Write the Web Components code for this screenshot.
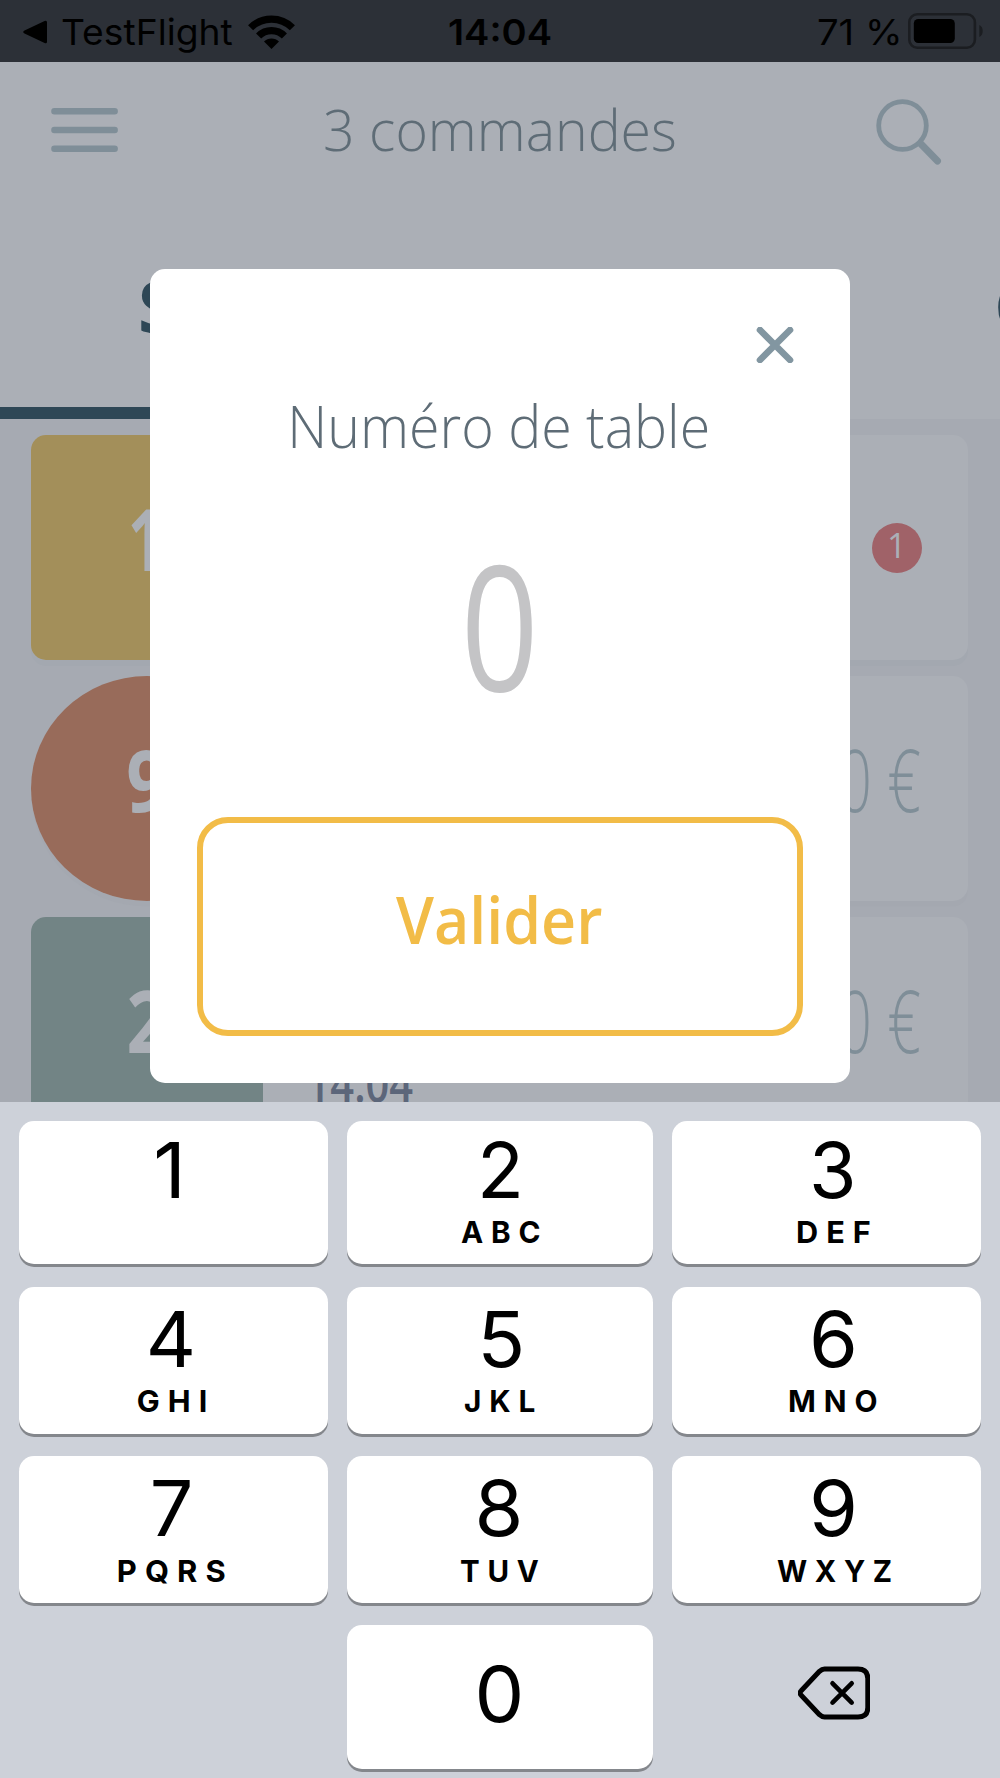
<!DOCTYPE html>
<html lang="fr">
<head>
<meta charset="utf-8">
<title>Commandes</title>
<style>
  body {
    margin: 0;
    background: #cdd1d9;
    font-family: Inter, "Liberation Sans", sans-serif;
  }
</style>
</head>
<body>
<orders-app></orders-app>

<script>
const ctx = document.createElement('canvas').getContext('2d');

const FONTS = {
  ui: 'Inter, "Liberation Sans", sans-serif',
  brand: '"Open Sans", "Noto Sans", sans-serif'
};

function define(name, html, setup) {
  const template = document.createElement('template');
  template.innerHTML = html;

  window.customElements.define(name, class extends HTMLElement {
    constructor() {
      super();
      this._shadowRoot = this.attachShadow({ mode: 'open' });
      this._shadowRoot.appendChild(template.content.cloneNode(true));
    }

    connectedCallback() {
      if (setup) setup(this, this._shadowRoot);
    }
  });
}

// A one line label whose box is its ink: w wide, h from cap top to baseline.
define('fit-label', `
  <style>
    :host { display: block; flex: none; }
    svg { display: block; overflow: visible; }
    text { fill: currentColor; white-space: pre; }
  </style>
  <svg><text></text></svg>
`, (host, root) => {
  const w = Number(host.getAttribute('w'));
  const h = Number(host.getAttribute('h'));
  const size = Number(host.getAttribute('size'));
  const weight = host.getAttribute('weight') || '400';
  const spacing = (host.getAttribute('spacing') || '0') + 'px';
  const family = FONTS[host.getAttribute('font') || 'brand'];
  const value = host.getAttribute('text');

  ctx.font = `${weight} ${size}px ${family}`;
  ctx.letterSpacing = spacing;
  const m = ctx.measureText(value);
  const ink = m.actualBoundingBoxLeft + m.actualBoundingBoxRight;
  const scale = w ? w / ink : 1;
  const width = w || ink;

  const svg = root.querySelector('svg');
  svg.setAttribute('width', width);
  svg.setAttribute('height', h);

  const text = root.querySelector('text');
  text.textContent = value;
  text.style.font = `${weight} ${size}px ${family}`;
  text.style.letterSpacing = spacing;
  text.setAttribute('transform', `translate(${m.actualBoundingBoxLeft * scale} ${h}) scale(${scale} 1)`);
});

define('status-bar', `
  <style>
    :host {
      display: grid;
      grid-template-columns: 1fr auto 1fr;
      align-items: center;
      box-sizing: border-box;
      height: 62px;
      padding: 2px 17px 0;
      background: #2c3037;
      color: #000;
    }
    div { display: flex; align-items: center; }
    svg { display: block; flex: none; }
    .back { gap: 15px; padding-left: 6px; }
    .power { gap: 9px; justify-content: flex-end; }
    .battery { margin-bottom: 3px; }
  </style>
  <div class="back">
    <svg width="24" height="24" viewBox="0 0 24 24"><path d="M1.5 10.6 21.6.9Q24 0 24 2.2v19.6q0 2.2-2.4 1.3L1.5 13.4q-2.6-1.4 0-2.8z"/></svg>
    <fit-label text="TestFlight" font="ui" w="171" h="26" size="36"></fit-label>
    <svg width="47" height="34" viewBox="0 0 47 34">
      <g fill="none" stroke="#000" stroke-width="7.2">
        <path d="M2.6 12.8a29.600 29.600 0 0 1 41.800 0"/>
        <path d="M10.600 21a18.200 18.200 0 0 1 25.800 0"/>
      </g>
      <path d="M23.5 34 16 26.6a10.6 10.6 0 0 1 15 0z"/>
    </svg>
  </div>
  <fit-label text="14:04" font="ui" weight="600" w="102" h="26" size="36"></fit-label>
  <div class="power">
    <fit-label text="71 %" font="ui" w="81" h="26" size="36"></fit-label>
    <svg class="battery" width="75" height="36" viewBox="0 0 75 36">
      <rect x="1.3" y="1.3" width="65.6" height="33.4" rx="8" fill="none" stroke="#1b1d21" stroke-width="2.6"/>
      <rect x="5.8" y="6" width="41" height="24" rx="4.5"/>
      <path d="M71.3 12q3.4 1.5 3.4 6t-3.4 6z" fill="#1b1d21"/>
    </svg>
  </div>
`);

define('app-header', `
  <style>
    :host {
      display: grid;
      grid-template-columns: 1fr auto 1fr;
      align-items: center;
      height: 136px;
      padding: 0 51px;
      color: #5e6c76;
    }
    svg { display: block; fill: none; stroke: #7f8e98; stroke-linecap: round; }
    .search { justify-self: end; margin: 4px 7px 0 0; }
  </style>
  <svg width="68" height="44" viewBox="0 0 68 44" stroke-width="6.4">
    <path d="M3.400 3.200h60.300M3.400 22h60.300M3.400 40.800h60.300"/>
  </svg>
  <fit-label text="3 commandes" weight="300" w="350" h="41" size="58"></fit-label>
  <svg class="search" width="66" height="66" viewBox="0 0 66 66">
    <circle cx="26.5" cy="26.5" r="23.8" stroke-width="4.8"/>
    <path d="M44.5 44.5 61.5 62" stroke-width="7"/>
  </svg>
`);

define('tab-strip', `
  <style>
    :host {
      display: flex;
      justify-content: space-between;
      height: 221px;
      color: #2e4756;
    }
    div { box-sizing: border-box; padding-top: 83px; overflow: hidden; }
    .active { width: 500px; padding-left: 141px; border-bottom: 12px solid #2e4756; }
    .next { width: 2px; }
  </style>
  <div class="active"><fit-label text="S" weight="700" h="52" size="72"></fit-label></div>
  <div class="next"><fit-label text="C" weight="700" h="52" size="72"></fit-label></div>
`);

define('order-card', `
  <style>
    :host {
      display: grid;
      grid-template-columns: 232px 1fr auto;
      height: 225px;
      border-radius: 15px;
      background: #abafb6;
      box-shadow: 0 6px 0 #a3a8b0;
    }
    .tile {
      display: flex;
      justify-content: center;
      box-sizing: border-box;
      padding-top: 74px;
      border-radius: 15px 0 0 15px;
      background: var(--tile);
      color: #abafb6;
    }
    :host([round]) { border-radius: 116px 15px 15px 116px / 112.5px 15px 15px 112.5px; box-shadow: 0 6px 0 -0.5px #a4a8b0; }
    :host([round]) .tile { border-radius: 50%; }
    .tile fit-label { transform: translateX(var(--nudge, 0)); }
    .detail { padding: 148px 0 0 46px; color: #5c667a; }
  </style>
  <div class="tile"></div>
  <div class="detail"><slot></slot></div>
  <slot name="end"></slot>
`, (host, root) => {
  root.querySelector('.tile').innerHTML =
    `<fit-label text="${host.getAttribute('table')}" weight="700" w="${host.getAttribute('digit')}" h="61.5" size="86"></fit-label>`;
});

define('count-badge', `
  <style>
    :host {
      display: flex;
      justify-content: center;
      align-self: center;
      box-sizing: border-box;
      width: 50px;
      height: 50px;
      margin-right: 46px;
      padding: 11px 5px 0 0;
      border-radius: 50%;
      background: #a06268;
      color: #abafb6;
    }
  </style>
  <fit-label text="1" w="9" h="24" size="34"></fit-label>
`);

define('order-price', `
  <style>
    :host { display: block; padding: 74px 48px 0 0; color: #7f8e98; }
  </style>
  <fit-label text="0 €" weight="360" w="79" h="62" size="86"></fit-label>
`);

define('order-list', `
  <style>
    :host {
      display: flex;
      flex-direction: column;
      gap: 16px;
      padding: 16px 32px 0 31px;
      background: #a6aab2;
    }
  </style>
  <order-card table="1" digit="23" style="--tile: #a38f5a; --nudge: -4.5px"><count-badge slot="end"></count-badge></order-card>
  <order-card table="9" digit="38" round style="--tile: #986b5a"><order-price slot="end"></order-price></order-card>
  <order-card table="2" digit="37" style="--tile: #728485">
    <fit-label text="14:04" weight="600" w="104" h="36.5" size="51"></fit-label>
    <order-price slot="end"></order-price>
  </order-card>
`);

define('outline-button', `
  <style>
    :host {
      display: flex;
      justify-content: center;
      box-sizing: border-box;
      height: 219px;
      padding: 74px 2px 0 0;
      border: 6px solid #f2bc47;
      border-radius: 31px;
      color: #f2bc47;
    }
  </style>
  <slot></slot>
`);

define('table-dialog', `
  <style>
    :host {
      display: flex;
      flex-direction: column;
      align-items: center;
      box-sizing: border-box;
      width: 700px;
      height: 814px;
      padding: 51px 47px 47px;
      border-radius: 15px;
      background: #fff;
      color: #5e6c76;
    }
    .close {
      display: block;
      align-self: flex-end;
      margin: 7px 9px 0 0;
      fill: none;
      stroke: #8296a1;
      stroke-width: 6.6;
      stroke-linecap: round;
    }
    .title { margin-top: 42px; }
    .value { margin: 116px 1px 0 0; color: #c4c4c6; }
    outline-button { align-self: stretch; margin-top: auto; }
  </style>
  <svg class="close" width="38" height="36" viewBox="0 0 38 36"><path d="M4 3 34 33M34 3 4 33"/></svg>
  <fit-label class="title" text="Numéro de table" weight="300" w="416" h="43" size="59"></fit-label>
  <fit-label class="value" text="0" weight="500" w="65" h="127" size="174"></fit-label>
  <outline-button><fit-label text="Valider" weight="600" w="206" h="47" size="66"></fit-label></outline-button>
`);

define('key-cap', `
  <style>
    :host {
      display: flex;
      flex-direction: column;
      align-items: center;
      box-sizing: border-box;
      padding-top: var(--top, 24px);
      border-radius: 15px;
      background: #fff;
      box-shadow: 0 3px 0 #84878c;
      color: #000;
    }
    .digit { transform: translateX(calc(var(--shift, 0px) + var(--nudge, 0px))); }
    .letters { margin-top: 23.5px; transform: translateX(var(--shift, 0px)); }
  </style>
`, (host, root) => {
  const digit = host.getAttribute('digit').split(' ');
  const letters = (host.getAttribute('letters') || '').split(' ');
  root.innerHTML += `<fit-label class="digit" text="${digit[0]}" font="ui" w="${digit[1]}" h="56" size="77"></fit-label>`;
  if (letters[0]) {
    root.innerHTML += `<fit-label class="letters" text="${letters[0]}" font="ui" weight="700" spacing="8" w="${letters[1]}" h="22" size="30.5"></fit-label>`;
  }
});

define('number-pad', `
  <style>
    :host {
      display: grid;
      grid-template-columns: 309px 306px 309px;
      grid-template-rows: 143px 147px 146.5px 143.5px;
      gap: 22.5px 19px;
      box-sizing: border-box;
      height: 676px;
      padding: 19px;
      background: #cdd1d9;
    }
    key-cap:nth-of-type(3n+1) { --shift: -2.2px; }
    key-cap:nth-of-type(3n) { --shift: 7px; }
    key-cap:nth-of-type(-n+3) { --top: 20.5px; }
    key-cap.zero { --top: 40.5px; --shift: -1.5px; grid-column: 2; }
    svg {
      display: block;
      align-self: center;
      justify-self: center;
      margin: -7px 0 0 15px;
      fill: none;
      stroke: #000;
      stroke-width: 5;
      stroke-linecap: round;
      stroke-linejoin: round;
    }
  </style>
  <key-cap digit="1 23" style="--nudge: -3.5px"></key-cap>
  <key-cap digit="2 37" letters="ABC 79"></key-cap>
  <key-cap digit="3 39" letters="DEF 72" style="--nudge: -1px"></key-cap>
  <key-cap digit="4 42.5" letters="GHI 68"></key-cap>
  <key-cap digit="5 39" letters="JKL 70" style="--nudge: 1.5px"></key-cap>
  <key-cap digit="6 41" letters="MNO 87"></key-cap>
  <key-cap digit="7 37" letters="PQRS 106"></key-cap>
  <key-cap digit="8 41" letters="TUV 78" style="--nudge: -1.5px"></key-cap>
  <key-cap digit="9 41" letters="WXYZ 114"></key-cap>
  <key-cap class="zero" digit="0 41"></key-cap>
  <svg width="72" height="54" viewBox="0 0 72 54">
    <path d="M26.5 3H60Q69.8 3 69.8 12.5V41.5Q69.8 51 60 51H26.5Q24 51 21.500 48.700L3.200 29.300Q.9 27 3.200 24.700L21.500 5.300Q24 3 26.5 3Z"/>
    <path d="M34.500 17.300 53.700 36.600M53.700 17.300 34.500 36.600" stroke-width="4.600"/>
  </svg>
`);

define('orders-app', `
  <style>
    :host { display: block; width: 1000px; height: 1778px; overflow: hidden; }
    main { position: relative; height: 1040px; overflow: hidden; background: #abafb6; }
    /* the dialog floats over the order list */
    table-dialog { position: absolute; top: 207px; left: 150px; }
  </style>
  <status-bar></status-bar>
  <main>
    <app-header></app-header>
    <tab-strip></tab-strip>
    <order-list></order-list>
    <table-dialog></table-dialog>
  </main>
  <number-pad></number-pad>
`);
</script>
</body>
</html>
